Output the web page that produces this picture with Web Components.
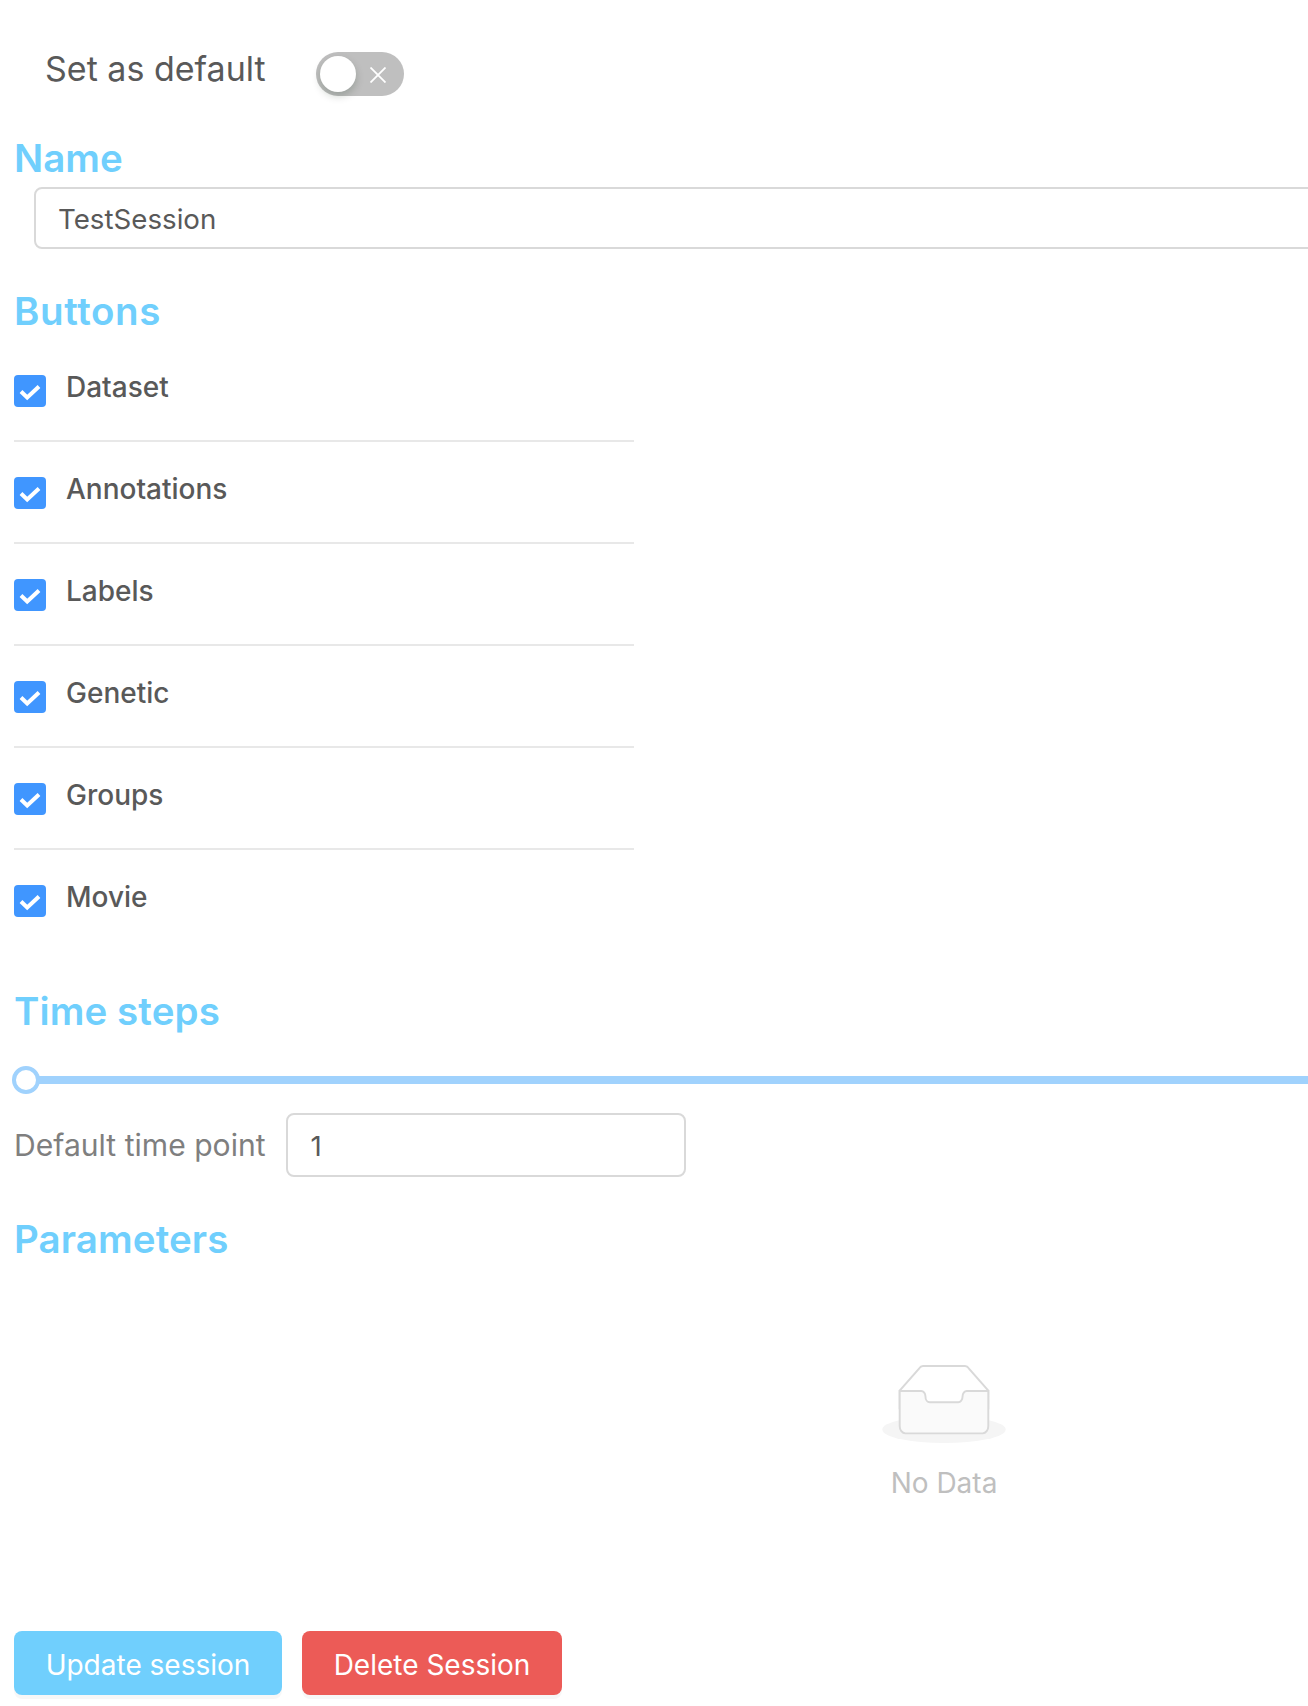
<!DOCTYPE html>
<html lang="en"><head><meta charset="utf-8"><title>Session</title>
<style>
html,body{margin:0;padding:0;background:#fff;overflow:hidden}
body{font-family:Inter,"Liberation Sans",sans-serif;color:#595959;width:1308px;height:1706px}
</style></head><body>
<session-form></session-form>
<script>
function def(name, html){
  const t=document.createElement('template');t.innerHTML=html;
  customElements.define(name,class extends HTMLElement{
    constructor(){super();this.attachShadow({mode:'open'}).appendChild(t.content.cloneNode(true));}
  });
}
def('x-toggle',`<style>
:host{display:block;width:88px;height:44px;position:relative;border-radius:22px;background:#bfbfbf;flex:none}
.k{position:absolute;left:4px;top:4px;width:36px;height:36px;border-radius:50%;background:#fff;box-shadow:0 4px 8px rgba(0,35,11,.2)}
svg{position:absolute;left:54px;top:15px}
</style><div class="k"></div><svg width="16" height="16" viewBox="0 0 16 16"><path d="M.5 .5L15.5 15.5M15.5 .5L.5 15.5" stroke="#fff" stroke-width="1.8" fill="none"/></svg>`);
def('x-heading',`<style>
:host{display:block;font-size:38.5px;line-height:48px;font-weight:600;color:#70cffd;padding-left:14px}
</style><slot></slot>`);
def('x-input',`<style>
:host{display:flex;align-items:center;box-sizing:border-box;height:62px;border:2px solid #d9d9d9;border-radius:8px;padding:2px 0 0 22px;font-size:27.7px;color:#595959;background:#fff}
</style><slot></slot>`);
def('x-check',`<style>
:host{display:flex;align-items:flex-start;gap:20px;box-sizing:border-box;height:102px;font-size:28px;font-weight:500;color:#595959;line-height:34px}
:host(:not(:last-child)){border-bottom:2px solid #e8e8e8}
.b{width:32px;height:32px;border-radius:4px;background:#4096ff;flex:none;margin-top:35px}
svg{display:block}
.l{margin-top:30px}
</style><div class="b"><svg width="32" height="32" viewBox="0 0 32 32"><path d="M7 16.5L13.2 22.5L25 11.5" stroke="#fff" stroke-width="4" fill="none"/></svg></div><div class="l"><slot></slot></div>`);
def('x-slider',`<style>
:host{display:block;height:28px;position:relative;margin-left:12px}
.t{position:absolute;left:14px;right:0;top:10px;height:8px;background:#a0d2fd}
.h{position:absolute;left:0;top:0;box-sizing:border-box;width:28px;height:28px;border-radius:50%;border:4px solid #a0d2fd;background:#fff}
</style><div class="t"></div><div class="h"></div>`);
def('x-empty',`<style>
:host{display:flex;flex-direction:column;align-items:center;font-size:28px;color:#bfbfbf;line-height:44px}
svg{display:block;margin-bottom:18px}
</style><svg width="124" height="79" viewBox="0 0 64 41"><g transform="translate(0 1)" fill="none" fill-rule="evenodd"><ellipse fill="#f5f5f5" cx="32" cy="33" rx="32" ry="7"/><g fill-rule="nonzero" stroke="#d9d9d9"><path d="M55 12.76L44.854 1.258C44.367.474 43.656 0 42.907 0H21.093c-.749 0-1.46.474-1.947 1.257L9 12.761V22h46v-9.24z"/><path d="M41.613 15.931c0-1.605.994-2.93 2.227-2.931H55v18.137C55 33.26 53.68 35 52.05 35h-40.1C10.32 35 9 33.259 9 31.137V13h11.16c1.233 0 2.227 1.323 2.227 2.928v.022c0 1.605 1.005 2.901 2.237 2.901h14.752c1.232 0 2.237-1.308 2.237-2.913v-.007z" fill="#fafafa"/></g></g></svg><slot></slot>`);
def('x-btn',`<style>
:host{display:flex;align-items:center;justify-content:center;box-sizing:border-box;height:64px;padding-top:3px;border-radius:8px;font-size:28px;color:#fff;box-shadow:0 4px 0 rgba(0,0,0,.03);background:var(--bg);width:var(--w)}
</style><slot></slot>`);
def('session-form',`<style>
:host{display:block;width:1308px;height:1706px;overflow:hidden;position:relative}
.def{display:flex;height:96px;padding:52px 0 0 45px;box-sizing:border-box;font-size:34px;line-height:34px;gap:50px}
.name{margin-top:38px}
x-input.n{margin:5px -10px 0 34px}
.btns{margin-top:38px;letter-spacing:.6px}
.list{width:620px;margin-left:14px;margin-top:5px}
.ts{margin-top:35px;letter-spacing:.1px}
x-slider{margin-top:31px}
.dtp{display:flex;align-items:center;gap:20px;padding-left:14px;margin-top:19px;font-size:30.1px;color:#7f7f7f}
.dtp x-input{width:400px;height:64px;padding-left:23px;font-size:27.7px}
.par{margin-top:38px;letter-spacing:.1px}
x-empty{margin-top:101px;margin-left:580px}
.act{display:flex;gap:20px;padding-left:14px;margin-top:126px}
</style>
<div class="def"><span>Set as default</span><x-toggle></x-toggle></div>
<x-heading class="name">Name</x-heading>
<x-input class="n">TestSession</x-input>
<x-heading class="btns">Buttons</x-heading>
<div class="list"><x-check>Dataset</x-check><x-check>Annotations</x-check><x-check>Labels</x-check><x-check>Genetic</x-check><x-check>Groups</x-check><x-check>Movie</x-check></div>
<x-heading class="ts">Time steps</x-heading>
<x-slider></x-slider>
<div class="dtp"><span>Default time point</span><x-input>1</x-input></div>
<x-heading class="par">Parameters</x-heading>
<x-empty>No Data</x-empty>
<div class="act"><x-btn style="--bg:#70cffd;--w:268px">Update session</x-btn><x-btn style="--bg:#ec5b57;--w:260px">Delete Session</x-btn></div>`);
</script></body></html>
